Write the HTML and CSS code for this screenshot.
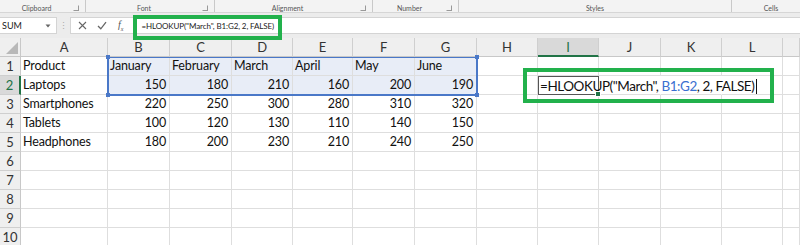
FILE: index.html
```html
<!DOCTYPE html>
<html lang="en">
<head>
  <meta charset="UTF-8">
  <title>HLOOKUP example</title>
  <link rel="stylesheet" href="styles.css">
</head>
<body>

<div class="page">
  <div class="ribbon">
    <div class="group g-clip"><span class="label">Clipboard</span><span class="launch"></span></div>
    <div class="group g-font"><span class="label">Font</span><span class="launch"></span></div>
    <div class="group g-align"><span class="label">Alignment</span><span class="launch"></span></div>
    <div class="group g-num"><span class="label">Number</span><span class="launch"></span></div>
    <div class="group g-styles"><span class="label">Styles</span></div>
    <div class="group g-cells"><span class="label">Cells</span></div>
  </div>

  <div class="fbar">
    <div class="namebox">
      <span>SUM</span>
      <svg width="6" height="4" viewBox="0 0 6 4"><path d="M0.5 0.5 L3 3.5 L5.5 0.5 Z" fill="#666"/></svg>
    </div>
    <div class="dots">⋮</div>
    <div class="formula">
      <svg class="fx-icon" width="9" height="9" viewBox="0 0 9 9"><path d="M1 1 L8 8 M8 1 L1 8" stroke="#666" stroke-width="1.1"/></svg>
      <svg class="fx-icon" width="10" height="9" viewBox="0 0 10 9"><path d="M1 5 L3.8 7.8 L9 1.2" stroke="#666" stroke-width="1.3" fill="none"/></svg>
      <span class="fx">f<sub>x</sub></span>
      <span class="ftext">=HLOOKUP("March", B1:G2, 2, FALSE)</span>
    </div>
  </div>

  <div class="sheet" id="sheet"></div>

  <!-- range reference B1:G2 -->
  <div class="range">
    <span class="knob k1"></span><span class="knob k2"></span>
    <span class="knob k3"></span><span class="knob k4"></span>
  </div>

  <!-- callout boxes -->
  <div class="callout c-bar"></div>
  <div class="callout c-cell"></div>
</div>

<script>
  const cols = ['A','B','C','D','E','F','G','H','I','J','K','L',''];
  const data = [
    ['Product', 'January', 'February', 'March', 'April', 'May', 'June'],
    ['Laptops', 150, 180, 210, 160, 200, 190],
    ['Smartphones', 220, 250, 300, 280, 310, 320],
    ['Tablets', 100, 120, 130, 110, 140, 150],
    ['Headphones', 180, 200, 230, 210, 240, 250]
  ];
  const sheet = document.getElementById('sheet');

  function cell(cls, text) {
    const d = document.createElement('div');
    d.className = cls;
    if (text !== undefined) d.textContent = text;
    sheet.appendChild(d);
    return d;
  }

  // Column headers
  cell('corner');
  cols.forEach(c => cell(c === 'I' ? 'colhead active' : 'colhead', c));

  // Rows
  for (let r = 1; r <= 10; r++) {
    cell(r === 2 ? 'rowhead active' : 'rowhead', r);
    const row = data[r - 1] || [];
    cols.forEach((c, i) => {
      let cls = 'cell';
      const v = row[i];
      if (typeof v === 'number') cls += ' num';
      if (r <= 2 && i >= 1 && i <= 6) cls += ' sel';
      if (r === 2 && (c === 'J' || c === 'K')) cls += ' spill';
      if (r === 2 && c === 'I') {
        const d = cell(cls + ' edit');
        d.innerHTML = '=HLOOKUP("March", <span class="ref">B1:G2</span>, 2, FALSE)<span class="caret"></span><span class="handle"></span>';
        return;
      }
      cell(cls, v);
    });
  }
</script>

</body>
</html>
```

FILE: styles.css
```css
body {
  margin: 0;
  background: #fff;
  font-family: Lato, 'Open Sans', sans-serif;
}

.page {
  position: relative;
  width: 800px;
  height: 245px;
  overflow: hidden;
}

/* Ribbon group labels */
.ribbon {
  display: flex;
  height: 12px;
  background: #f3f3f3;
  border-bottom: 1px solid #d6d6d6;
  overflow: hidden;
}

.group {
  display: flex;
  align-items: center;
  flex-shrink: 0;
  border-right: 1px solid #c9c9c9;
  box-sizing: border-box;
}

.g-clip { width: 86px; }
.g-font { width: 129px; }
.g-align { width: 158px; }
.g-num { width: 86px; }
.g-styles { width: 273px; }
.g-cells { width: 78px; border-right: none; }

.label {
  flex: 1;
  text-align: center;
  font-size: 7px;
  color: #555;
  padding-top: 3px;
}

.launch {
  width: 4px;
  height: 4px;
  margin: 4px 6px 0 0;
  border: 1px solid #999;
  border-top-color: transparent;
  border-left-color: transparent;
}

/* Formula bar */
.fbar {
  display: flex;
  align-items: stretch;
  height: 17px;
  padding: 4px 0;
  background: #ececec;
}

.namebox {
  width: 57px;
  box-sizing: border-box;
  background: #fff;
  border: 1px solid #d4d4d4;
  border-left: none;
  display: flex;
  align-items: center;
  justify-content: space-between;
  padding: 0 5px 0 2px;
  font-size: 9px;
  color: #222;
}

.dots {
  width: 13px;
  text-align: center;
  font-size: 9px;
  color: #aaa;
  line-height: 17px;
}

.formula {
  flex: 1;
  background: #fff;
  border: 1px solid #d4d4d4;
  border-right: none;
  display: flex;
  align-items: center;
  padding-left: 7px;
  gap: 10px;
}

.fx {
  font-family: 'Liberation Serif', serif;
  font-style: italic;
  font-size: 10px;
  color: #555;
  margin-left: 1px;
}

.fx sub {
  font-size: 6px;
}

.ftext {
  margin-left: 8px;
  font-size: 8px;
  letter-spacing: -0.1px;
  color: #222;
}

/* Sheet grid */
.sheet {
  display: grid;
  grid-template-columns: 21px 87px 62px 62px 61px 60px 62px 62px 61px 61px 62px 61px 61px 17px;
  grid-auto-rows: 19px;
  font-size: 12.5px;
  letter-spacing: -0.15px;
  color: #111;
}

.sheet > div {
  box-sizing: border-box;
  border-right: 1px solid #dedede;
  border-bottom: 1px solid #dedede;
  white-space: nowrap;
  line-height: 18px;
}

.corner {
  background: #efefef;
  position: relative;
  border-color: #c8c8c8 !important;
}

.corner::after {
  content: '';
  position: absolute;
  right: 2px;
  bottom: 2px;
  border-left: 12px solid transparent;
  border-bottom: 12px solid #b8b8b8;
}

.colhead {
  background: #efefef;
  text-align: center;
  color: #333;
  font-size: 13px;
  border-right-color: #cfcfcf !important;
  border-bottom-color: #c8c8c8 !important;
}

.rowhead {
  background: #efefef;
  text-align: center;
  color: #333;
  font-size: 13px;
  border-right-color: #c8c8c8 !important;
  border-bottom-color: #cfcfcf !important;
}

.colhead.active {
  background: #d9d9d9;
  border-bottom: 2px solid #217346 !important;
  color: #217346;
}

.rowhead.active {
  background: #d9d9d9;
  border-right: 2px solid #217346 !important;
  color: #217346;
}

.cell {
  padding: 0 3px 0 2px;
}

.num {
  text-align: right;
}

.sel {
  background: #e8edf7;
}

.spill {
  border-right-color: transparent !important;
}

.edit {
  position: relative;
  overflow: visible;
  border: 1px solid #555 !important;
  font-size: 13.5px;
  letter-spacing: -0.45px;
  color: #111;
  padding-left: 1px;
  z-index: 1;
}

.ref {
  color: #3a6fd0;
}

.caret {
  display: inline-block;
  width: 1px;
  height: 15px;
  margin-left: 2px;
  vertical-align: -3px;
  background: #111;
}

.handle {
  position: absolute;
  right: -3px;
  bottom: -3px;
  width: 4px;
  height: 4px;
  background: #217346;
  border: 1px solid #fff;
}

/* Range reference outline */
.range {
  position: absolute;
  left: 107px;
  top: 57px;
  width: 371px;
  height: 39px;
  box-sizing: border-box;
  border: 2px solid #4a78c8;
  border-top-width: 1px;
  pointer-events: none;
}

.knob {
  position: absolute;
  width: 4px;
  height: 4px;
  background: #4a78c8;
}

.k1 { left: -3px; top: -3px; }
.k2 { right: -3px; top: -3px; }
.k3 { left: -3px; bottom: -3px; }
.k4 { right: -3px; bottom: -3px; }

/* Green annotation boxes */
.callout {
  position: absolute;
  box-sizing: border-box;
  border: 4px solid #22b14c;
  z-index: 2;
}

.c-bar {
  left: 133px;
  top: 15px;
  width: 149px;
  height: 25px;
}

.c-cell {
  left: 523px;
  top: 68px;
  width: 251px;
  height: 35px;
}
```
